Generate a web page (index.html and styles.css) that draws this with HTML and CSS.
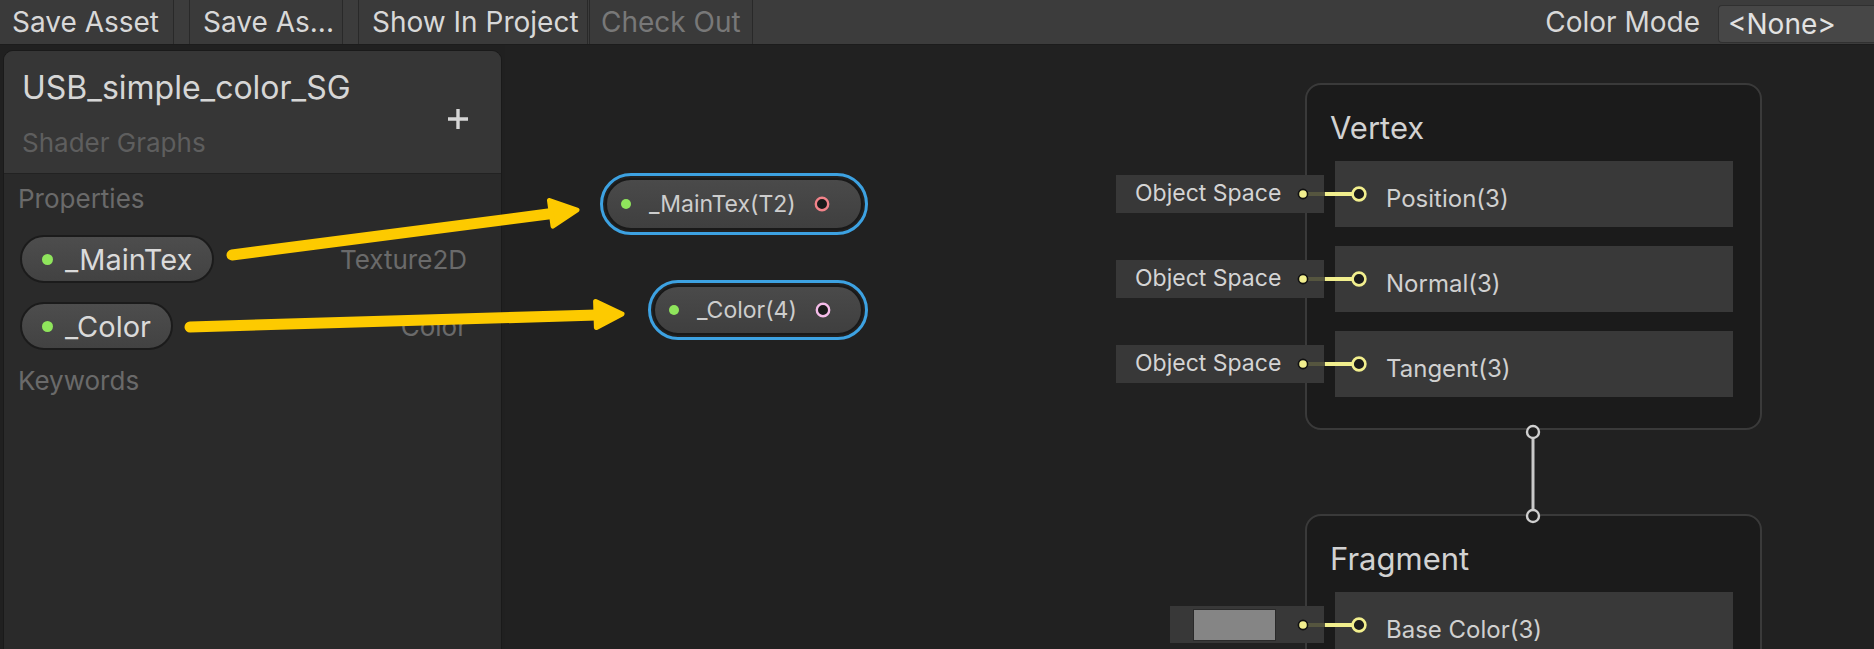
FILE: index.html
```html
<!DOCTYPE html>
<html>
<head>
<meta charset="utf-8">
<link rel="stylesheet" href="styles.css">
</head>
<body>
<div class="app">
  <header class="toolbar">
    <div class="tb-left">
      <div class="tb-btn btn-save">Save Asset</div>
      <div class="tb-btn btn-saveas spaced">Save As...</div>
      <div class="tb-btn btn-show spaced">Show In Project</div>
      <div class="tb-btn btn-checkout tight disabled">Check Out</div>
    </div>
    <div class="tb-right">
      <span class="tb-label">Color Mode</span>
      <div class="dropdown">&lt;None&gt;</div>
    </div>
  </header>

  <main class="main">
    <aside class="blackboard">
      <div class="bb-header">
        <div class="bb-titles">
          <div class="bb-title">USB_simple_color_SG</div>
          <div class="bb-subtitle">Shader Graphs</div>
        </div>
        <svg class="bb-add" width="24" height="24" viewBox="0 0 24 24"><path d="M12 2V22M2 12H22" stroke="#d6d6d6" stroke-width="3.4" fill="none"/></svg>
      </div>
      <div class="bb-section">
        <div class="bb-section-title">Properties</div>
        <div class="prop-list">
          <div class="prop-row">
            <div class="pill"><span class="dot"></span><span class="pill-text">_MainTex</span></div>
            <span class="prop-type">Texture2D</span>
          </div>
          <div class="prop-row">
            <div class="pill"><span class="dot"></span><span class="pill-text">_Color</span></div>
            <span class="prop-type">Color</span>
          </div>
        </div>
        <div class="bb-section-title keywords">Keywords</div>
      </div>
    </aside>

    <section class="canvas">
      <div class="prop-node node-maintex">
        <div class="prop-node-inner">
          <span class="dot small"></span>
          <span class="node-text">_MainTex(T2)</span>
          <svg class="out-port" width="16" height="16" viewBox="0 0 16 16"><circle cx="8" cy="8" r="6.2" fill="#1a1a1a" stroke="#f2838a" stroke-width="2.4"/></svg>
        </div>
      </div>
      <div class="prop-node node-color">
        <div class="prop-node-inner">
          <span class="dot small"></span>
          <span class="node-text">_Color(4)</span>
          <svg class="out-port" width="16" height="16" viewBox="0 0 16 16"><circle cx="8" cy="8" r="6.2" fill="#1a1a1a" stroke="#f5bce9" stroke-width="2.4"/></svg>
        </div>
      </div>

      <div class="master vertex">
        <div class="master-title">Vertex</div>
        <div class="ports">
          <div class="port-row">
            <div class="field">Object Space</div>
            <svg class="wire" width="72" height="20" viewBox="0 0 72 20"><line x1="12" y1="10" x2="30" y2="10" stroke="#55553f" stroke-width="4"/><line x1="29" y1="10" x2="57" y2="10" stroke="#f2ef8e" stroke-width="4"/><circle cx="7" cy="10" r="4.6" fill="#f2ef8e" stroke="#111" stroke-width="1.6"/><circle cx="63" cy="10" r="6.4" fill="#1c1c1c" stroke="#f2ef8e" stroke-width="2.6"/></svg>
            <span class="port-label">Position(3)</span>
          </div>
          <div class="port-row">
            <div class="field">Object Space</div>
            <svg class="wire" width="72" height="20" viewBox="0 0 72 20"><line x1="12" y1="10" x2="30" y2="10" stroke="#55553f" stroke-width="4"/><line x1="29" y1="10" x2="57" y2="10" stroke="#f2ef8e" stroke-width="4"/><circle cx="7" cy="10" r="4.6" fill="#f2ef8e" stroke="#111" stroke-width="1.6"/><circle cx="63" cy="10" r="6.4" fill="#1c1c1c" stroke="#f2ef8e" stroke-width="2.6"/></svg>
            <span class="port-label">Normal(3)</span>
          </div>
          <div class="port-row">
            <div class="field">Object Space</div>
            <svg class="wire" width="72" height="20" viewBox="0 0 72 20"><line x1="12" y1="10" x2="30" y2="10" stroke="#55553f" stroke-width="4"/><line x1="29" y1="10" x2="57" y2="10" stroke="#f2ef8e" stroke-width="4"/><circle cx="7" cy="10" r="4.6" fill="#f2ef8e" stroke="#111" stroke-width="1.6"/><circle cx="63" cy="10" r="6.4" fill="#1c1c1c" stroke="#f2ef8e" stroke-width="2.6"/></svg>
            <span class="port-label">Tangent(3)</span>
          </div>
        </div>
      </div>

      <div class="master fragment">
        <div class="master-title">Fragment</div>
        <div class="ports">
          <div class="port-row">
            <div class="field color-field"><span class="swatch"></span></div>
            <svg class="wire" width="72" height="20" viewBox="0 0 72 20"><line x1="12" y1="10" x2="30" y2="10" stroke="#55553f" stroke-width="4"/><line x1="29" y1="10" x2="57" y2="10" stroke="#f2ef8e" stroke-width="4"/><circle cx="7" cy="10" r="4.6" fill="#f2ef8e" stroke="#111" stroke-width="1.6"/><circle cx="63" cy="10" r="6.4" fill="#1c1c1c" stroke="#f2ef8e" stroke-width="2.6"/></svg>
            <span class="port-label">Base Color(3)</span>
          </div>
        </div>
      </div>

      <svg class="flow-link" width="20" height="110" viewBox="0 0 20 110"><line x1="10" y1="18" x2="10" y2="90" stroke="#c9c9c9" stroke-width="3"/><circle cx="10" cy="12" r="6" fill="#1e1e1e" stroke="#cfcfcf" stroke-width="2.4"/><circle cx="10" cy="96" r="6" fill="#1e1e1e" stroke="#cfcfcf" stroke-width="2.4"/></svg>
    </section>

    <svg class="arrows" width="1874" height="604" viewBox="0 0 1874 604">
      <g fill="#fdca00" stroke="#fdca00" stroke-linejoin="round" stroke-linecap="round">
        <line x1="232" y1="210" x2="552" y2="168.5" stroke-width="11"/>
        <polygon points="577,165 553,181 549.5,155.5" stroke-width="5"/>
        <line x1="190" y1="282" x2="597" y2="270" stroke-width="11"/>
        <polygon points="622,269 596.4,282.5 595.6,256.5" stroke-width="5"/>
      </g>
    </svg>
  </main>
</div>
</body>
</html>
```

FILE: styles.css
```css
* { box-sizing: border-box; }

html, body {
  margin: 0;
  padding: 0;
  background: #202020;
  width: 1874px;
  height: 649px;
  overflow: hidden;
  font-family: Inter, "Noto Sans", "Liberation Sans", sans-serif;
}

.app {
  display: flex;
  flex-direction: column;
  width: 1874px;
  height: 649px;
}

/* ---------- toolbar ---------- */
.toolbar {
  height: 45px;
  flex-shrink: 0;
  display: flex;
  justify-content: space-between;
  background: #3c3c3c;
  border-bottom: 1px solid #1c1c1c;
}

.tb-left {
  display: flex;
}

.tb-btn {
  height: 44px;
  line-height: 44px;
  padding: 0 0 0 13px;
  font-size: 28px;
  color: #d8d8d8;
  background: #3a3a3a;
  border-left: 1px solid #292929;
  border-right: 1px solid #292929;
  white-space: nowrap;
}

.btn-save { width: 174px; border-left: none; padding-left: 12px; }
.btn-saveas { width: 154px; }
.btn-show { width: 230px; }
.btn-checkout { width: 164px; padding-left: 11px; }

.tb-btn.spaced { margin-left: 15px; }
.tb-btn.tight { margin-left: 1px; }
.tb-btn.disabled { color: #787878; }

.tb-right {
  display: flex;
  align-items: flex-start;
}

.tb-label {
  font-size: 28px;
  line-height: 44px;
  color: #d8d8d8;
  margin-right: 18px;
}

.dropdown {
  margin-top: 5px;
  width: 156px;
  height: 38px;
  line-height: 36px;
  padding-left: 9px;
  font-size: 28px;
  color: #e2e2e2;
  background: #474747;
  border: 1px solid #303030;
  border-right: none;
  border-radius: 4px 0 0 4px;
}

/* ---------- main ---------- */
.main {
  position: relative;
  flex: 1;
  display: flex;
  padding-left: 3px;
  overflow: hidden;
  background: #202020;
}

/* ---------- blackboard ---------- */
.blackboard {
  width: 499px;
  flex-shrink: 0;
  margin-top: 5px;
  height: 640px;
  background: #2a2a2a;
  border: 1px solid #1a1a1a;
  border-radius: 10px 10px 0 0;
  overflow: hidden;
}

.bb-header {
  height: 123px;
  display: flex;
  padding: 18px 31px 0 18px;
  background: #363636;
  border-bottom: 1px solid #222;
}

.bb-titles { flex: 1; }

.bb-title {
  font-size: 32px;
  line-height: 38px;
  color: #d6d6d6;
}

.bb-subtitle {
  margin-top: 20px;
  font-size: 26px;
  line-height: 32px;
  color: #5e5e5e;
}

.bb-add {
  margin-top: 38px;
  flex-shrink: 0;
}

.bb-section {
  padding: 9px 34px 0 14px;
}

.bb-section-title {
  font-size: 26px;
  line-height: 32px;
  color: #6a6a6a;
}

.bb-section-title.keywords { margin-top: 15px; }

.prop-list {
  margin-top: 20px;
  display: flex;
  flex-direction: column;
  gap: 19px;
}

.prop-row {
  display: flex;
  align-items: center;
  justify-content: space-between;
  height: 48px;
  padding-left: 2px;
}

.pill {
  height: 48px;
  display: flex;
  align-items: center;
  gap: 12px;
  padding: 0 20px 0 20px;
  border-radius: 24px;
  border: 2px solid #1b1b1b;
  background: linear-gradient(#4d4d4d, #424242);
}

.dot {
  width: 11px;
  height: 11px;
  border-radius: 50%;
  background: #8fe55c;
  flex-shrink: 0;
}

.dot.small {
  width: 10px;
  height: 10px;
}

.pill-text {
  font-size: 29px;
  line-height: 1;
  color: #dadada;
}

.prop-type {
  font-size: 26px;
  color: #6a6a6a;
}

/* ---------- canvas ---------- */
.canvas {
  position: relative;
  flex: 1;
  margin-left: 3px;
  background: #212121;
  overflow: hidden;
}

.prop-node {
  position: absolute;
  border: 3px solid #3da2e2;
  border-radius: 34px;
  padding: 2px;
}

.node-maintex { left: 95px; top: 128px; width: 268px; height: 62px; }
.node-color { left: 143px; top: 235px; width: 220px; height: 60px; }

.prop-node-inner {
  height: 100%;
  display: flex;
  align-items: center;
  gap: 18px;
  padding-left: 14px;
  border-radius: 30px;
  border: 2px solid #191919;
  background: linear-gradient(#4a4a4a, #3f3f3f);
}

.node-text {
  font-size: 23px;
  color: #cdcdcd;
  white-space: nowrap;
}

.out-port { flex-shrink: 0; }

.master {
  position: absolute;
  left: 800px;
  width: 457px;
  border: 2px solid #3a3a3a;
  border-radius: 16px;
  background: #1b1b1b;
}

.master.vertex { top: 38px; height: 347px; }
.master.fragment { top: 469px; height: 260px; }

.master-title {
  padding: 25px 0 0 23px;
  font-size: 31px;
  line-height: 36px;
  color: #d2d2d2;
}

.ports {
  margin: 15px 27px 0 28px;
  display: flex;
  flex-direction: column;
  gap: 19px;
}

.port-row {
  position: relative;
  height: 66px;
  display: flex;
  align-items: center;
  padding: 8px 0 0 51px;
  background: #393939;
}

.port-label {
  font-size: 24px;
  line-height: 29px;
  color: #d0d0d0;
}

.field {
  position: absolute;
  left: -219px;
  top: 14px;
  width: 208px;
  height: 38px;
  padding-left: 19px;
  font-size: 23px;
  line-height: 37px;
  color: #d4d4d4;
  background: #383838;
  white-space: nowrap;
}

.field.color-field {
  left: -165px;
  width: 154px;
  height: 37px;
  padding: 3px 0 0 23px;
}

.swatch {
  display: block;
  width: 83px;
  height: 32px;
  background: #858585;
  border: 1px solid #2a2a2a;
}

.wire {
  position: absolute;
  left: -39px;
  top: 23px;
}

.flow-link {
  position: absolute;
  left: 1018px;
  top: 375px;
  z-index: 2;
}

/* ---------- annotation arrows ---------- */
.arrows {
  position: absolute;
  left: 0;
  top: 0;
  z-index: 5;
  pointer-events: none;
}
```
